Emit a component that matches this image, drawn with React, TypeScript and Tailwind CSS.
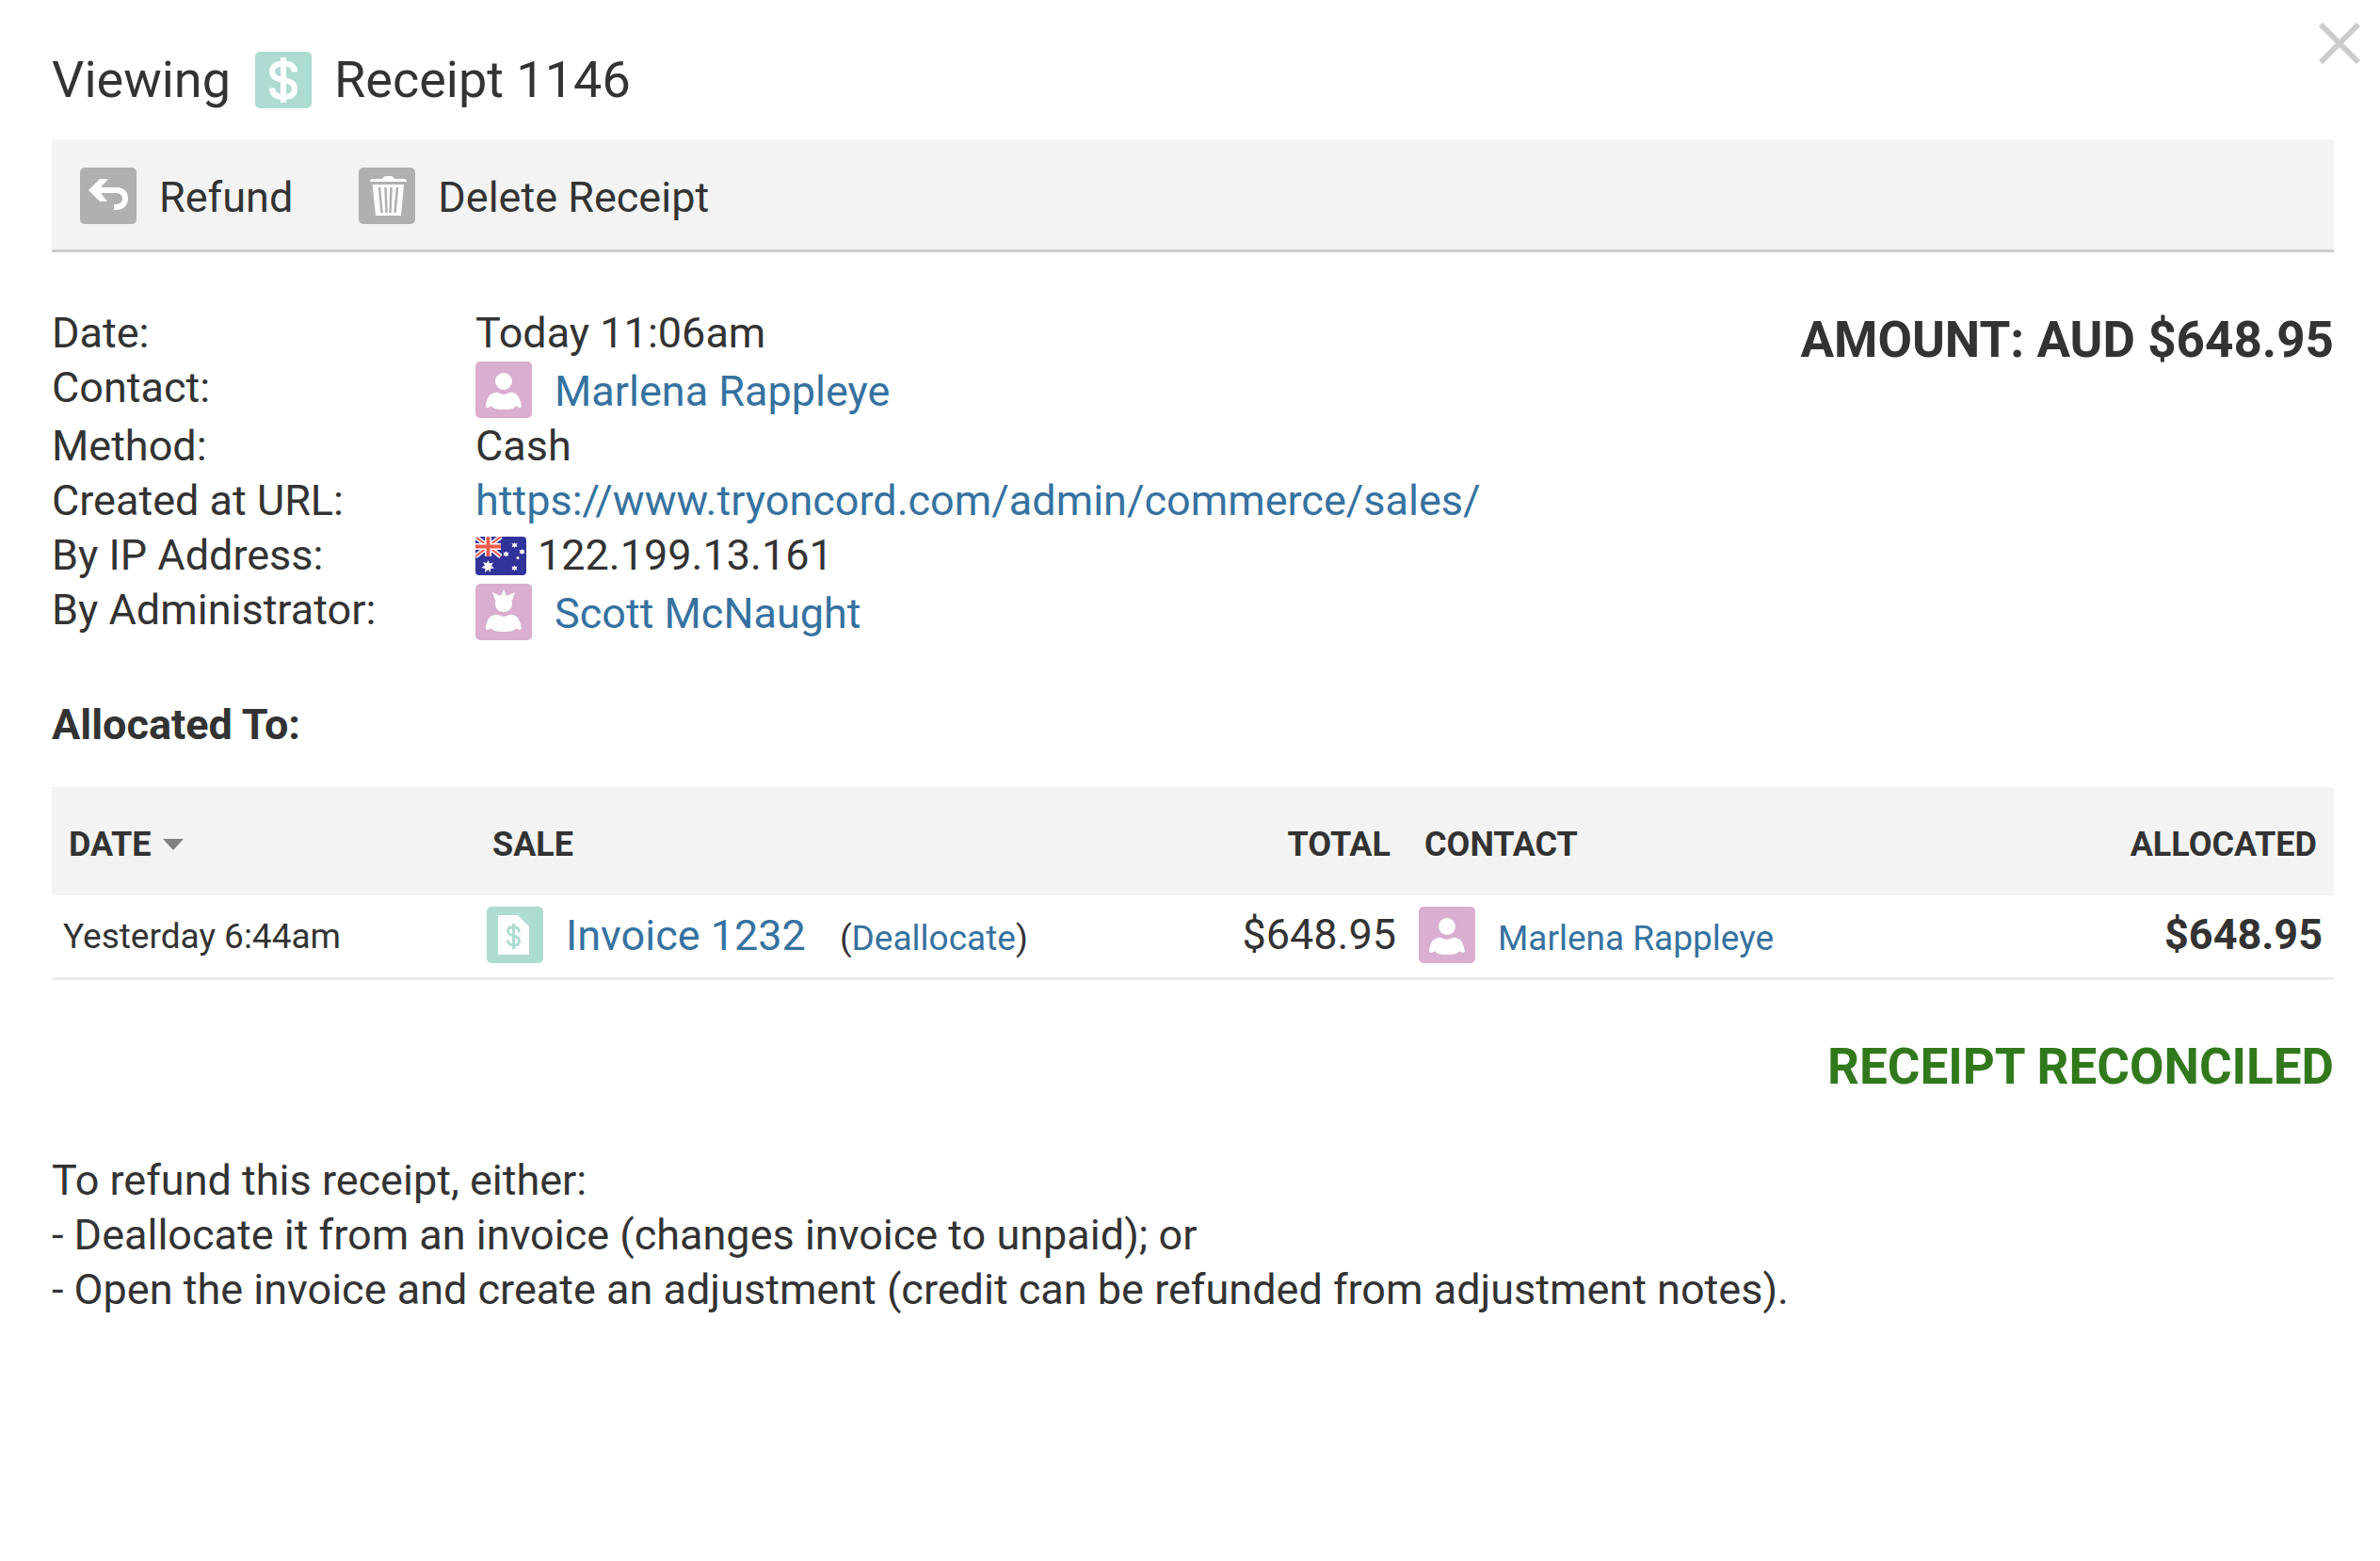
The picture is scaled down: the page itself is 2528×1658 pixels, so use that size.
import type { FC, ReactNode } from 'react';

interface IconProps {
  className?: string;
}

interface Allocation {
  date: string;
  sale: string;
  total: string;
  contact: string;
  allocated: string;
}

const allocations: Allocation[] = [
  {
    date: 'Yesterday 6:44am',
    sale: 'Invoice 1232',
    total: '$648.95',
    contact: 'Marlena Rappleye',
    allocated: '$648.95',
  },
];

const ReceiptIcon: FC<IconProps> = ({ className }) => (
  <svg viewBox="0 0 60 60" className={`size-[60px] shrink-0 ${className ?? ''}`} aria-hidden="true">
    <rect width="60" height="60" rx="5" fill="#addcd3" />
    <path
      d="M42 21.500C42 15 37.500 12.500 30 12.500C22.500 12.500 18 15.500 18 21C18 27 23 28.500 30 30C37 31.500 42 33 42 39.500C42 45.500 37.500 48 30 48C22 48 18 45 18 38.500"
      fill="none"
      stroke="#fff"
      strokeWidth="6"
    />
    <path d="M30 6v48" stroke="#fff" strokeWidth="6" />
  </svg>
);

const InvoiceIcon: FC<IconProps> = ({ className }) => (
  <svg viewBox="0 0 60 60" className={`size-[60px] shrink-0 ${className ?? ''}`} aria-hidden="true">
    <rect width="60" height="60" rx="5" fill="#addcd3" />
    <path d="M12 9h21l12 12v30H12z" fill="#fff" />
    <path
      d="M34.500 27.500C34.500 23.500 32 21.500 28.500 21.500C25 21.500 22.500 23 22.500 26C22.500 29 25 30 28.500 31C32 32 34.500 33 34.500 36.500C34.500 39.500 32 41 28.500 41C25 41 22.500 39 22.500 35.500"
      fill="none"
      stroke="#addcd3"
      strokeWidth="3"
    />
    <path d="M28.500 18v27" stroke="#addcd3" strokeWidth="3" />
  </svg>
);

const RefundIcon: FC = () => (
  <svg viewBox="0 0 60 60" className="size-[60px] shrink-0" aria-hidden="true">
    <rect width="60" height="60" rx="5" fill="#b0b0b2" />
    <path d="M21 12h9l-8 9h17c8 0 12 5 12 12s-5 12-12 12h-3v-6c6 0 9-2 9-6s-3-6-7-6H22l7 9h-8L9 24z" fill="#fff" />
  </svg>
);

const TrashIcon: FC = () => (
  <svg viewBox="0 0 60 60" className="size-[60px] shrink-0" aria-hidden="true">
    <rect width="60" height="60" rx="5" fill="#b0b0b2" />
    <path d="M12 15c0-2 1-3 3-3h9c2 0 2-3 5-3h5c3 0 3 3 5 3h9c2 0 3 1 3 3z" fill="#fff" />
    <path d="M14.500 18h33.500L45 51H18z" fill="#fff" />
    <path d="M22 21l2.500 27M28.500 21l1 27M34.500 21l-1 27M41 21l-2.500 27" stroke="#b0b0b2" strokeWidth="2.500" />
  </svg>
);

const bust =
  'M21 33C24 32 26 35 30 35S36 32 39 33C45 34 47 38 49 47C49 50 45 49 43 47C42 50 37 51 30 51S18 50 17 47C15 49 11 50 11 47C12 38 15 34 21 33Z';

const PersonIcon: FC = () => (
  <svg viewBox="0 0 60 60" className="size-[60px] shrink-0" aria-hidden="true">
    <rect width="60" height="60" rx="5" fill="#d9aecf" />
    <circle cx="30" cy="21" r="9" fill="#fff" />
    <path d={bust} fill="#fff" />
  </svg>
);

const AdminIcon: FC = () => (
  <svg viewBox="0 0 60 60" className="size-[60px] shrink-0" aria-hidden="true">
    <rect width="60" height="60" rx="5" fill="#d9aecf" />
    <path d="M18 9l9 4 3-7 3 7 9-4-3 9v3c0 6-4 9-9 9s-9-3-9-9v-3z" fill="#fff" />
    <path d="M21 18h1M38 18h1" stroke="#d9aecf" />
    <path d={bust} fill="#fff" />
  </svg>
);

const FlagIcon: FC = () => (
  <svg viewBox="0 0 54 41" className="h-[41px] w-[54px] shrink-0" role="img" aria-label="Australia">
    <clipPath id="flag">
      <rect width="54" height="41" rx="4" />
    </clipPath>
    <g clipPath="url(#flag)">
      <rect width="54" height="41" fill="#32329b" />
      <path d="M0 0l27 21M27 0L0 21" stroke="#fff" strokeWidth="5" />
      <path d="M0 0l27 21M27 0L0 21" stroke="#f05a50" strokeWidth="2" />
      <path d="M13.500 0v21M0 10.500h27" stroke="#fff" strokeWidth="7" />
      <path d="M13.500 0v21M0 10.500h27" stroke="#f05a50" strokeWidth="4" />
      <path d="M13.500 25l1.500 3.500 4-1-2 3.500 3 2.500-4 .5v4l-2.500-3-3.500 3 .5-4-4-1 3.500-2.500-2-3.500 4 1z" fill="#fff" />
      <g fill="#fff">
        <path id="star" d="M41.500 6l1 1.500 2-.5-1 2 1 2-2-.500-1 1.500-1-1.500-2 .5 1-2-1-2 2 .5z" />
        <use href="#star" x="-9" y="9.500" />
        <use href="#star" x="8" y="7" />
        <use href="#star" y="24.500" />
        <circle cx="45" cy="22.500" r="1.500" />
      </g>
    </g>
  </svg>
);

interface DetailProps {
  label: string;
  children: ReactNode;
}

const Detail: FC<DetailProps> = ({ label, children }) => (
  <div className="grid grid-cols-[450px_1fr]">
    <dt>{label}</dt>
    <dd className="flex items-center">{children}</dd>
  </div>
);

const link = 'text-[#3572a0] hover:underline';

const App: FC = () => {
  return (
    <main className="relative min-h-screen bg-white pt-[52px] pr-[49px] pl-[55px] font-[Roboto,sans-serif] text-[45px] leading-[58px] text-[#333]">
      <button type="button" aria-label="Close" className="absolute top-[23px] right-5">
        <svg viewBox="0 0 46 46" className="size-[46px]" aria-hidden="true">
          <path d="M3 3l40 40M43 3L3 43" stroke="#ccc" strokeWidth="6" />
        </svg>
      </button>

      <h1 className="flex h-[66px] items-center text-[54px]">
        Viewing
        <ReceiptIcon className="mr-6 ml-[26px]" />
        Receipt 1146
      </h1>

      <div className="mt-[30px] flex items-center gap-[70px] border-b-3 border-[#ccc] bg-[#f3f3f3] px-[30px] pt-[30px] pb-[27px] leading-[56px]">
        <button type="button" className="flex items-center gap-6">
          <RefundIcon />
          <span className="pt-1">Refund</span>
        </button>
        <button type="button" className="flex items-center gap-6">
          <TrashIcon />
          <span className="pt-1">Delete Receipt</span>
        </button>
      </div>

      <section className="mt-[57px] flex justify-between">
        <dl>
          <Detail label="Date:">Today 11:06am</Detail>
          <Detail label="Contact:">
            <span className="flex h-[62px] items-center gap-6">
              <PersonIcon />
              <a href="#contact" className={`pt-1 ${link}`}>Marlena Rappleye</a>
            </span>
          </Detail>
          <Detail label="Method:">Cash</Detail>
          <Detail label="Created at URL:">
            <a href="https://www.tryoncord.com/admin/commerce/sales/" className={link}>
              https://www.tryoncord.com/admin/commerce/sales/
            </a>
          </Detail>
          <Detail label="By IP Address:">
            <span className="flex items-center gap-3">
              <FlagIcon />
              122.199.13.161
            </span>
          </Detail>
          <Detail label="By Administrator:">
            <span className="flex h-[62px] items-center gap-6">
              <AdminIcon />
              <a href="#administrator" className={`pt-1 ${link}`}>Scott McNaught</a>
            </span>
          </Detail>
        </dl>
        <p className="pt-1 text-[53px] leading-[64px] font-bold">AMOUNT: AUD $648.95</p>
      </section>

      <h2 className="mt-[60px] font-bold">Allocated To:</h2>

      <table className="mt-[37px] w-full table-fixed text-[37px] leading-[48px]">
        <thead className="bg-[#f3f3f3] text-left text-[36px] uppercase [text-shadow:0_2px_0_#fff]">
          <tr className="h-[115px]">
            <th className="w-[450px] px-[18px] pt-1.5">
              <button type="button" className="flex items-center gap-3 font-bold uppercase">
                Date
                <svg viewBox="0 0 22 12" className="h-3 w-[22px]" aria-hidden="true">
                  <path d="M0 0h22L11 12z" fill="#808080" />
                </svg>
              </button>
            </th>
            <th className="px-[18px] pt-1.5">Sale</th>
            <th className="w-[200px] px-[18px] pt-1.5 text-right">Total</th>
            <th className="w-[600px] px-[18px] pt-1.5">Contact</th>
            <th className="w-[384px] px-[18px] pt-1.5 text-right">Allocated</th>
          </tr>
        </thead>
        <tbody>
          {allocations.map((row) => (
            <tr key={row.sale} className="h-[88px] border-b-3 border-[#eee]">
              <td className="px-3 pt-1 pb-0.5">{row.date}</td>
              <td className="px-3 pb-0.5">
                <div className="flex items-center gap-6">
                  <InvoiceIcon />
                  <div className="flex items-baseline gap-9 pt-1">
                    <a href="#invoice" className={`text-[45px] ${link}`}>{row.sale}</a>
                    <span>(<a href="#deallocate" className={link}>Deallocate</a>)</span>
                  </div>
                </div>
              </td>
              <td className="px-3 pb-0.5 text-right text-[45px]">{row.total}</td>
              <td className="px-3 pb-0.5">
                <div className="flex items-center gap-6">
                  <PersonIcon />
                  <a href="#contact" className={`pt-2 ${link}`}>{row.contact}</a>
                </div>
              </td>
              <td className="px-3 pb-0.5 text-right text-[45px] font-bold">{row.allocated}</td>
            </tr>
          ))}
        </tbody>
      </table>

      <p className="mt-[60px] text-right text-[53px] leading-[64px] font-bold text-[#31791c] uppercase">
        Receipt Reconciled
      </p>

      <div className="mt-[60px] pb-[60px]">
        <p>To refund this receipt, either:</p>
        <p>- Deallocate it from an invoice (changes invoice to unpaid); or</p>
        <p>- Open the invoice and create an adjustment (credit can be refunded from adjustment notes).</p>
      </div>
    </main>
  );
};

export default App;
